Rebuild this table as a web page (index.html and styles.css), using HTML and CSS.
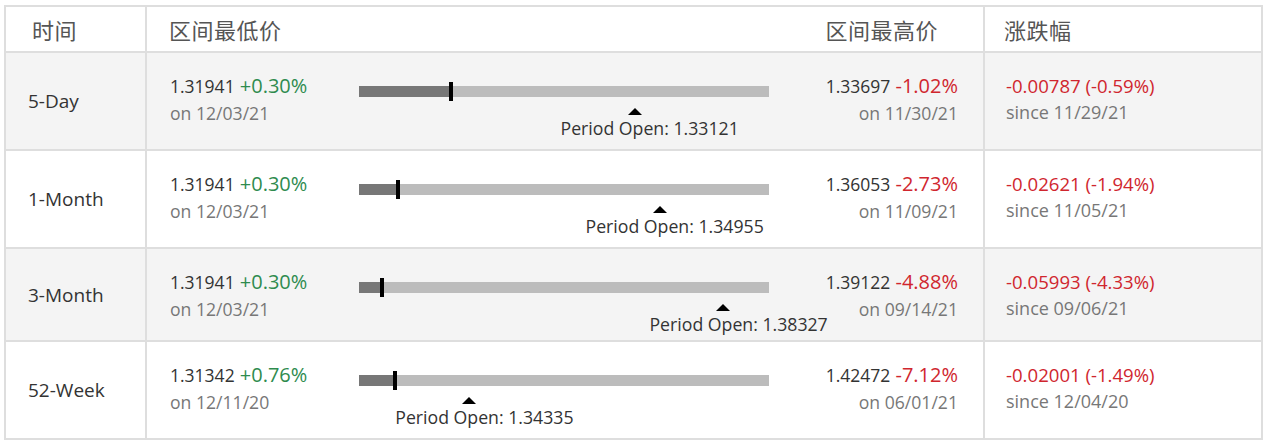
FILE: index.html
```html
<!DOCTYPE html>
<html lang="zh">
<head>
<meta charset="utf-8">
<title>Performance</title>
<link rel="stylesheet" href="styles.css">
</head>
<body>
<div class="perf">
  <div class="row head">
    <div class="c-time"><span class="h">时间</span></div>
    <div class="c-range">
      <span class="h h-low">区间最低价</span>
      <span class="h h-high">区间最高价</span>
    </div>
    <div class="c-chg"><span class="h">涨跌幅</span></div>
  </div>

  <div class="row alt">
    <div class="c-time">5-Day</div>
    <div class="c-range">
      <div class="low"><div><span class="num">1.31941</span> <span class="pct up">+0.30%</span></div><div class="sub">on 12/03/21</div></div>
      <div class="bar"><div class="track"><div class="fill" style="width:22.4%"></div><div class="mark" style="left:22.4%"></div><div class="tri" style="left:67.2%"></div><div class="open" style="left:67.2%">Period Open: 1.33121</div></div></div>
      <div class="high"><div><span class="num">1.33697</span> <span class="pct down">-1.02%</span></div><div class="sub">on 11/30/21</div></div>
    </div>
    <div class="c-chg"><div class="chg down">-0.00787 (-0.59%)</div><div class="sub since">since 11/29/21</div></div>
  </div>

  <div class="row">
    <div class="c-time">1-Month</div>
    <div class="c-range">
      <div class="low"><div><span class="num">1.31941</span> <span class="pct up">+0.30%</span></div><div class="sub">on 12/03/21</div></div>
      <div class="bar"><div class="track"><div class="fill" style="width:9.6%"></div><div class="mark" style="left:9.6%"></div><div class="tri" style="left:73.3%"></div><div class="open" style="left:73.3%">Period Open: 1.34955</div></div></div>
      <div class="high"><div><span class="num">1.36053</span> <span class="pct down">-2.73%</span></div><div class="sub">on 11/09/21</div></div>
    </div>
    <div class="c-chg"><div class="chg down">-0.02621 (-1.94%)</div><div class="sub since">since 11/05/21</div></div>
  </div>

  <div class="row alt short">
    <div class="c-time">3-Month</div>
    <div class="c-range">
      <div class="low"><div><span class="num">1.31941</span> <span class="pct up">+0.30%</span></div><div class="sub">on 12/03/21</div></div>
      <div class="bar"><div class="track"><div class="fill" style="width:5.5%"></div><div class="mark" style="left:5.5%"></div><div class="tri" style="left:88.9%"></div><div class="open" style="left:88.9%">Period Open: 1.38327</div></div></div>
      <div class="high"><div><span class="num">1.39122</span> <span class="pct down">-4.88%</span></div><div class="sub">on 09/14/21</div></div>
    </div>
    <div class="c-chg"><div class="chg down">-0.05993 (-4.33%)</div><div class="sub since">since 09/06/21</div></div>
  </div>

  <div class="row">
    <div class="c-time">52-Week</div>
    <div class="c-range">
      <div class="low"><div><span class="num">1.31342</span> <span class="pct up">+0.76%</span></div><div class="sub">on 12/11/20</div></div>
      <div class="bar"><div class="track"><div class="fill" style="width:8.9%"></div><div class="mark" style="left:8.9%"></div><div class="tri" style="left:26.9%"></div><div class="open" style="left:26.9%">Period Open: 1.34335</div></div></div>
      <div class="high"><div><span class="num">1.42472</span> <span class="pct down">-7.12%</span></div><div class="sub">on 06/01/21</div></div>
    </div>
    <div class="c-chg"><div class="chg down">-0.02001 (-1.49%)</div><div class="sub since">since 12/04/20</div></div>
  </div>
</div>
</body>
</html>
```

FILE: styles.css
```css
html, body {
  margin: 0;
  padding: 0;
  background: #fff;
}
body {
  font-family: "Open Sans", "Noto Sans CJK SC", sans-serif;
  color: #333;
}
.perf {
  margin: 5px 0 0 4px;
  width: 1259px;
  border: 2px solid #dedede;
  border-bottom: none;
  box-sizing: border-box;
}
.row {
  display: grid;
  grid-template-columns: 141px 838px 1fr;
  height: 98px;
  border-bottom: 2px solid #dedede;
  box-sizing: border-box;
  background: #fff;
}
.row.alt { background: #f4f4f4; }
.row.short { height: 93px; }
.row.head { height: 46px; }
.c-time {
  border-right: 2px solid #dedede;
  display: flex;
  align-items: center;
  padding-left: 22px;
  font-size: 19px;
  color: #333;
}
.c-range {
  border-right: 2px solid #dedede;
  display: flex;
  padding-left: 23px;
  padding-right: 25px;
}
.c-chg {
  padding: 20px 0 0 21px;
}
.head .c-time, .head .c-range, .head .c-chg {
  display: flex;
  align-items: center;
  padding-top: 0;
}
.head .c-time { padding-left: 26px; }
.head .c-range { padding-left: 22px; }
.head .c-chg { padding-left: 19px; }
.h {
  font-family: "Noto Sans CJK SC", sans-serif;
  font-size: 22px;
  color: #555;
  letter-spacing: 0.5px;
}
.h-high { margin-left: auto; margin-right: 20px; }
.low, .high {
  padding-top: 20px;
  line-height: 26px;
}
.low { width: 189px; }
.high { flex: 1; text-align: right; }
.num { font-size: 17.5px; color: #333; margin-right: 1px; }
.pct { font-size: 20px; }
.up { color: #2e8b4e; }
.down { color: #d0262e; }
.chg { font-size: 18.6px; line-height: 26px; }
.sub { font-size: 17.6px; color: #777; line-height: 26px; }
.sub.since { font-size: 18px; }
.bar { width: 410px; padding-top: 33px; }
.track {
  position: relative;
  height: 11px;
  background: #bcbcbc;
}
.fill {
  height: 100%;
  background: #777;
}
.mark {
  position: absolute;
  top: -4px;
  width: 4px;
  height: 19px;
  margin-left: -2px;
  background: #000;
}
.tri {
  position: absolute;
  top: 22px;
  width: 0;
  height: 0;
  margin-left: -7px;
  border-left: 7px solid transparent;
  border-right: 7px solid transparent;
  border-bottom: 7px solid #000;
}
.open {
  position: absolute;
  top: 30px;
  margin-left: -74px;
  white-space: nowrap;
  font-size: 17.7px;
  line-height: 24px;
  color: #333;
}
```
